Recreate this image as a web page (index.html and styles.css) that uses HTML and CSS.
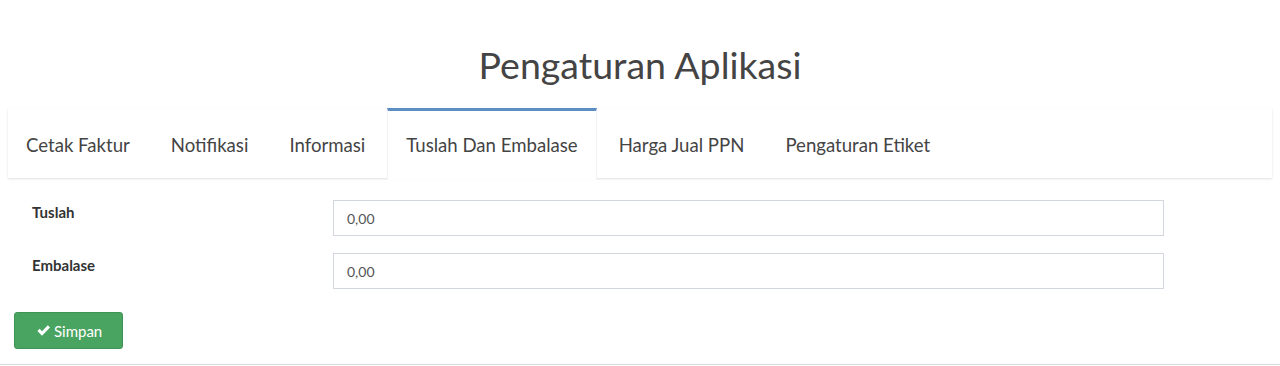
FILE: index.html
```html
<!DOCTYPE html>
<html>
<head lang="id">
  <meta charset="UTF-8">
  <title>Pengaturan Aplikasi</title>
  <link rel="stylesheet" href="styles.css">
</head>
<body>
  <h1 class="pageTitle">Pengaturan Aplikasi</h1>
  <div class="tabBox">
    <ul class="tabs">
      <li class="tab">Cetak Faktur</li>
      <li class="tab">Notifikasi</li>
      <li class="tab">Informasi</li>
      <li class="tab tabActive">Tuslah Dan Embalase</li>
      <li class="tab">Harga Jual PPN</li>
      <li class="tab">Pengaturan Etiket</li>
    </ul>
  </div>
  <form class="settingsForm">
    <div class="formRow">
      <label class="formLabel">Tuslah</label>
      <input class="formInput" type="text" value="0,00">
    </div>
    <div class="formRow">
      <label class="formLabel">Embalase</label>
      <input class="formInput" type="text" value="0,00">
    </div>
    <button class="btnSave" type="button">
      <svg class="checkIcon" viewBox="0 0 16 16" width="15" height="15">
        <path d="M1.5 8.6 L3.9 6.2 L6.4 8.7 L12.6 2.5 L15 4.9 L6.4 13.5 Z" fill="#fff"/>
      </svg>Simpan
    </button>
  </form>
  <div class="footerLine"></div>
</body>
</html>
```

FILE: styles.css
```css
body {
  margin: 0;
  background: #fff;
  font-family: "Lato", "Open Sans", sans-serif;
  color: #333;
}
.pageTitle {
  margin: 0;
  padding-top: 40px;
  height: 68px;
  box-sizing: content-box;
  text-align: center;
  font-weight: normal;
  font-size: 37.5px;
  line-height: 50px;
  color: #444;
}
.tabBox {
  margin: 0 8px;
  background: #fff;
  box-shadow: 0 1px 2px rgba(0, 0, 0, 0.12);
  height: 70px;
}
.tabs {
  list-style: none;
  margin: 0;
  padding: 0;
  display: flex;
  height: 70px;
}
.tab {
  padding: 0 18px;
  margin-right: 5px;
  font-size: 18.6px;
  color: #444;
  border-top: 3px solid transparent;
  box-sizing: border-box;
  line-height: 68px;
}
.tabActive {
  border-top-color: #5b8fc2;
  border-left: 1px solid #f2f2f2;
  border-right: 1px solid #f2f2f2;
  background: #fff;
  height: 72px;
  position: relative;
  z-index: 1;
  margin-left: -1px;
  margin-right: 4px;
}
.settingsForm {
  padding: 22px 14px 0 14px;
}
.formRow {
  display: flex;
  align-items: flex-start;
  margin-bottom: 17px;
}
.formLabel {
  width: 319px;
  padding-left: 18px;
  padding-top: 3px;
  box-sizing: border-box;
  font-size: 15px;
  font-weight: bold;
  color: #333;
}
.formInput {
  width: 831px;
  height: 36px;
  box-sizing: border-box;
  border: 1px solid #d2d6de;
  padding: 0 13px;
  font-family: inherit;
  font-size: 14px;
  color: #555;
  outline: none;
}
.btnSave {
  display: flex;
  align-items: center;
  gap: 3px;
  width: 109px;
  height: 37px;
  margin-top: 23px;
  padding: 0 0 0 21px;
  background: #4aa461;
  border: 1px solid #3f9455;
  border-radius: 3px;
  color: #fff;
  font-family: inherit;
  font-size: 15px;
}
.footerLine {
  border-top: 1px solid #ddd;
  margin-top: 15px;
}
```
